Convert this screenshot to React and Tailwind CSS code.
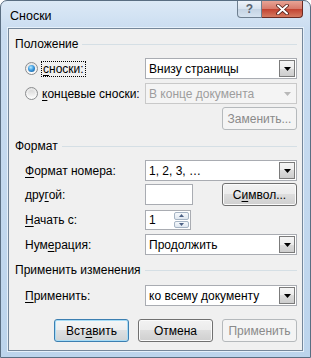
import React from 'react';

const U = ({ children }) => (
  <span className="underline decoration-1 underline-offset-2">{children}</span>
);

const Arrow = ({ disabled }) => (
  <svg width="7" height="4" viewBox="0 0 7 4">
    <path d="M0 0h7L3.5 4z" fill={disabled ? '#b8b8b8' : '#000'} />
  </svg>
);

const Combo = ({ value, disabled }) => (
  <div
    className={`flex h-[21px] w-[152px] border ${
      disabled ? 'border-[#c9c9c9] bg-[#f4f4f4] text-[#9d9d9d]' : 'border-[#a9acb2] bg-white text-black'
    }`}
  >
    <div className="flex flex-1 items-center pl-[3px]">{value}</div>
    <div
      className={`m-[1px] flex w-[16px] items-center justify-center ${
        disabled
          ? 'bg-[#f4f4f4]'
          : 'border border-[#7b7b7b] bg-[linear-gradient(#f5f5f5_0%,#ececec_50%,#dcdcdc_50%,#cdcdcd_100%)]'
      }`}
    >
      <Arrow disabled={disabled} />
    </div>
  </div>
);

const Btn = ({ children, variant, className = '' }) => {
  const look =
    variant === 'default'
      ? 'border-[#3c7fb1] text-black shadow-[inset_0_0_0_1px_#a7dcf6] bg-[linear-gradient(#f4f6f7_0%,#eceeef_50%,#dde0e2_50%,#cfd3d5_100%)]'
      : variant === 'disabled'
      ? 'border-[#b5b9bc] text-[#8a8a8a] bg-[#f4f4f4]'
      : 'border-[#707070] text-black shadow-[inset_0_0_0_1px_#fbfbfb] bg-[linear-gradient(#f2f2f2_0%,#ebebeb_50%,#dddddd_50%,#cfcfcf_100%)]';
  return (
    <div
      className={`flex h-[23px] w-[75px] items-center justify-center rounded-[3px] border ${look} ${className}`}
    >
      {children}
    </div>
  );
};

const Radio = ({ checked }) => (
  <div className="flex h-[13px] w-[13px] items-center justify-center rounded-full border border-[#8a8c8e] bg-[linear-gradient(#e4e4e4,#fdfdfd)]">
    <div
      className={`h-[7px] w-[7px] rounded-full ${
        checked
          ? 'bg-[radial-gradient(circle_at_40%_35%,#b7ecff_0%,#3c9ae0_45%,#0c4e8e_100%)]'
          : 'bg-[linear-gradient(#d9d9d9,#f7f7f7)]'
      }`}
    />
  </div>
);

const Header = ({ children, className = '' }) => (
  <div className={`flex h-[16px] items-center pl-[6px] pr-[5px] ${className}`}>
    <span>{children}</span>
    <div className="ml-[4px] h-px flex-1 bg-[#d5dfe5]" />
  </div>
);

const Row = ({ label, children, className = '' }) => (
  <div className={`flex items-center ${className}`}>
    <div className="w-[136px] pl-[16px]">{label}</div>
    {children}
  </div>
);

export default function App() {
  return (
    <div
      className="flex h-[358px] w-[311px] flex-col overflow-hidden rounded-t-[7px] border border-[#5a6e82] bg-[linear-gradient(#dce9f6_0px,#c9dcf0_30px,#bcd4ec_100%)] text-[12px] leading-[16px]"
      style={{ fontFamily: '"Liberation Sans", Arial, sans-serif' }}
    >
      <div className="flex h-[27px] shrink-0 items-start pl-[9px] pr-[7px]">
        <div className="pt-[7px] text-[12.5px] text-black">Сноски</div>
        <div className="ml-auto flex">
          <div className="flex h-[17px] w-[25px] items-center justify-center rounded-bl-[4px] border border-t-0 border-[#6e7f90] bg-[linear-gradient(#eef3f9_0%,#d7e2ee_50%,#c4d3e3_50%,#d6e3f0_100%)] text-[12px] font-bold text-[#5a6470]">
            ?
          </div>
          <div className="flex h-[17px] w-[41px] items-center justify-center rounded-br-[4px] border border-l-0 border-t-0 border-[#6b2a22] bg-[linear-gradient(#e8a496_0%,#d7796a_50%,#c2412f_50%,#d57a60_100%)]">
            <svg width="13" height="11" viewBox="0 0 13 11">
              <path d="M2 1.5l9 8M11 1.5l-9 8" stroke="#4a1a14" strokeWidth="3.6" strokeLinecap="round" />
              <path d="M2 1.5l9 8M11 1.5l-9 8" stroke="#fff" strokeWidth="2" strokeLinecap="round" />
            </svg>
          </div>
        </div>
      </div>

      <div className="mx-[7px] mb-[6px] flex flex-1 flex-col border border-[#75879a] bg-[#f0f0f0] pt-[7px] text-black shadow-[0_0_0_1px_#e6f0fa]">
        <Header>Положение</Header>

        <div className="mt-[6px] flex items-center">
          <div className="flex w-[136px] items-center pl-[16px]">
            <Radio checked />
            <span className="ml-[3px] border border-dotted border-black px-[1px] leading-[14px]">
              <U>с</U>носки:
            </span>
          </div>
          <Combo value="Внизу страницы" />
        </div>

        <div className="mt-[4px] flex items-center">
          <div className="flex w-[136px] items-center pl-[16px]">
            <Radio />
            <span className="ml-[4px] whitespace-nowrap">
              <U>к</U>онцевые сноски:
            </span>
          </div>
          <Combo value="В конце документа" disabled />
        </div>

        <div className="mt-[3px] flex justify-end pr-[5px]">
          <Btn variant="disabled">Заменить...</Btn>
        </div>

        <Header className="mt-[8px]">Формат</Header>

        <Row
          className="mt-[6px]"
          label={
            <>
              <U>Ф</U>ормат номера:
            </>
          }
        >
          <Combo value="1, 2, 3, …" />
        </Row>

        <Row
          className="mt-[2px]"
          label={
            <>
              дру<U>г</U>ой:
            </>
          }
        >
          <div className="h-[21px] w-[48px] border border-[#a9acb2] bg-white" />
          <Btn className="ml-auto mr-[5px]">
            С<U>и</U>мвол...
          </Btn>
        </Row>

        <Row
          className="mt-[4px]"
          label={
            <>
              <U>Н</U>ачать с:
            </>
          }
        >
          <div className="flex h-[20px] w-[46px] border border-[#a9acb2] bg-white">
            <div className="flex flex-1 items-center pl-[3px]">1</div>
            <div className="my-[1px] mr-[1px] flex w-[15px] flex-col gap-px">
              <div className="flex flex-1 items-center justify-center rounded-[2px] border border-[#a6b4c4] bg-[linear-gradient(#f6f9fc,#dfe7f0)]">
                <svg width="5" height="3" viewBox="0 0 5 3">
                  <path d="M0 3h5L2.5 0z" fill="#4d6185" />
                </svg>
              </div>
              <div className="flex flex-1 items-center justify-center rounded-[2px] border border-[#a6b4c4] bg-[linear-gradient(#f6f9fc,#dfe7f0)]">
                <svg width="5" height="3" viewBox="0 0 5 3">
                  <path d="M0 0h5L2.5 3z" fill="#4d6185" />
                </svg>
              </div>
            </div>
          </div>
        </Row>

        <Row
          className="mt-[4px]"
          label={
            <>
              Нум<U>е</U>рация:
            </>
          }
        >
          <Combo value="Продолжить" />
        </Row>

        <Header className="mt-[7px]">Применить изменения</Header>

        <Row
          className="mt-[7px]"
          label={
            <>
              <U>П</U>рименить:
            </>
          }
        >
          <Combo value="ко всему документу" />
        </Row>

        <div className="mt-[13px] flex justify-end gap-[9px] pr-[5px]">
          <Btn variant="default">
            Вст<U>а</U>вить
          </Btn>
          <Btn>Отмена</Btn>
          <Btn variant="disabled">Применить</Btn>
        </div>
      </div>
    </div>
  );
}
